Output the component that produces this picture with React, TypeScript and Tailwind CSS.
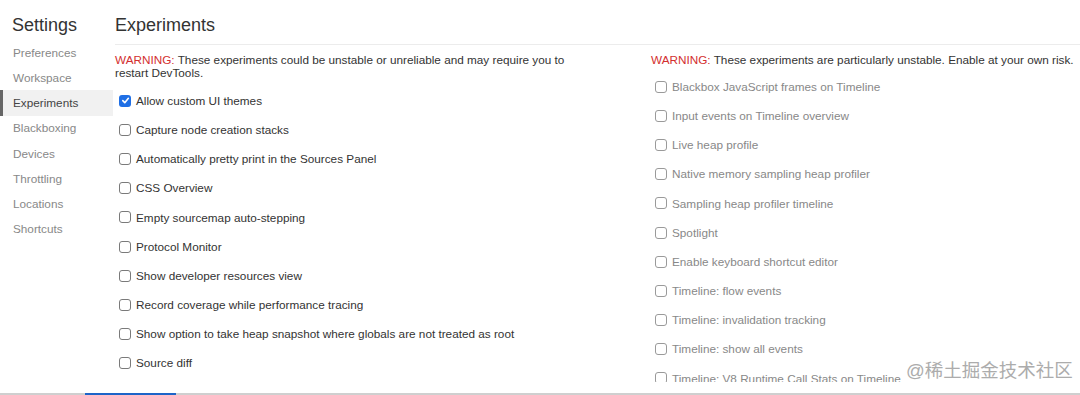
const sections = ["Preferences", "Workspace", "Experiments", "Blackboxing", "Devices", "Throttling", "Locations", "Shortcuts"];

const stable = [
  { label: "Allow custom UI themes", checked: true },
  { label: "Capture node creation stacks" },
  { label: "Automatically pretty print in the Sources Panel" },
  { label: "CSS Overview" },
  { label: "Empty sourcemap auto-stepping" },
  { label: "Protocol Monitor" },
  { label: "Show developer resources view" },
  { label: "Record coverage while performance tracing" },
  { label: "Show option to take heap snapshot where globals are not treated as root" },
  { label: "Source diff" },
];

const unstable = [
  "Blackbox JavaScript frames on Timeline",
  "Input events on Timeline overview",
  "Live heap profile",
  "Native memory sampling heap profiler",
  "Sampling heap profiler timeline",
  "Spotlight",
  "Enable keyboard shortcut editor",
  "Timeline: flow events",
  "Timeline: invalidation tracking",
  "Timeline: show all events",
  "Timeline: V8 Runtime Call Stats on Timeline",
];

function Checkbox({ checked, muted }: { checked?: boolean; muted?: boolean }) {
  if (checked) {
    return (
      <span className="flex h-[12px] w-[12px] items-center justify-center rounded-[3px] bg-[#1f6fe5]">
        <svg width="9" height="9" viewBox="0 0 10 10" fill="none">
          <path d="M2 5.2 L4.2 7.4 L8.2 2.6" stroke="white" strokeWidth="1.8" strokeLinecap="round" strokeLinejoin="round" />
        </svg>
      </span>
    );
  }
  return (
    <span
      className={
        muted
          ? "h-[12px] w-[12px] rounded-[3px] border border-[#9a9a9a] bg-white"
          : "h-[12px] w-[12px] rounded-[3px] border border-[#7a7a7a] bg-white"
      }
    />
  );
}

function Row({ label, checked, muted }: { label: string; checked?: boolean; muted?: boolean }) {
  return (
    <div className="flex h-[29.2px] items-center pl-[4px]">
      <Checkbox checked={checked} muted={muted} />
      <span className={muted ? "ml-[5px] whitespace-nowrap text-[#888]" : "ml-[5px] whitespace-nowrap text-[#333]"}>{label}</span>
    </div>
  );
}

export default function App() {
  return (
    <div className="relative flex h-[395px] w-[1080px] flex-col overflow-hidden bg-white font-['Liberation_Sans',Arial,sans-serif] text-[11.75px]">
      <div className="flex h-[382px] overflow-hidden">
        {/* sidebar */}
        <div className="w-[115px] shrink-0">
          <div className="h-[39px] pl-[12px] pt-[14px] text-[18px] leading-[22px] text-[#333]">Settings</div>
          <div className="mt-[1px]">
            {sections.map((s) =>
              s === "Experiments" ? (
                <div key={s} className="mr-[2px] flex h-[25.2px] items-center border-l-[3px] border-[#666] bg-[#f1f1f1] pl-[10px] text-[#444]">
                  {s}
                </div>
              ) : (
                <div key={s} className="flex h-[25.2px] items-center pl-[13px] text-[#888]">
                  {s}
                </div>
              )
            )}
          </div>
        </div>

        {/* main */}
        <div className="flex-1">
          <div className="h-[45px] border-b border-[#ececec] pt-[14px] text-[18px] leading-[22px] text-[#333]">Experiments</div>
          <div className="flex">
            <div className="w-[536px] shrink-0">
              <p className="max-w-[470px] pt-[8px] leading-[13px] text-[#333]">
                <span className="text-[#d32f2f]">WARNING:</span> These experiments could be unstable or unreliable and may require you to restart DevTools.
              </p>
              <div className="mt-[7px]">
                {stable.map((e) => (
                  <Row key={e.label} label={e.label} checked={e.checked} />
                ))}
              </div>
            </div>
            <div className="flex-1 whitespace-nowrap">
              <p className="pt-[8px] leading-[13px] text-[#333]">
                <span className="text-[#d32f2f]">WARNING:</span> These experiments are particularly unstable. Enable at your own risk.
              </p>
              <div className="mt-[6px]">
                {unstable.map((l) => (
                  <Row key={l} label={l} muted />
                ))}
              </div>
            </div>
          </div>
        </div>
      </div>

      <div className="flex-1" />
      <div className="flex h-[2px] bg-[#cfcfcf]">
        <div className="ml-[85px] w-[91px] bg-[#1d64c8]" />
      </div>

      <div className="absolute left-[906px] top-[358px] text-[18.5px] leading-[26px] text-[#acacac] font-['Liberation_Sans','Noto_Sans_CJK_SC',sans-serif]">
        @稀土掘金技术社区
      </div>
    </div>
  );
}
